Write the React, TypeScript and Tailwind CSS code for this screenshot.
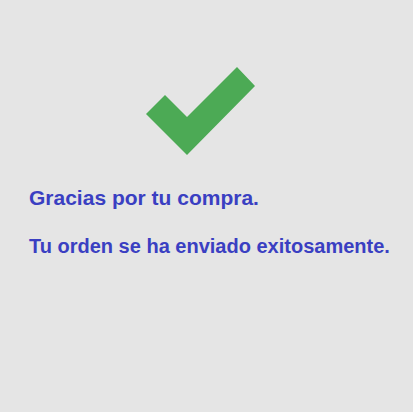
import React from "react";

export default function App() {
  return (
    <div className="w-[413px] h-[412px] bg-[#e5e5e5] flex flex-col" style={{ fontFamily: '"Liberation Sans", Arial, sans-serif' }}>
      <div className="h-[160px] relative">
        <svg width="413" height="160" className="absolute left-0 top-0">
          <polygon points="165,95 146,114 187,155 255,86 237,67 187,117" fill="#4caa55" />
        </svg>
      </div>
      <div className="pl-[29px] pt-[26px] text-[#3a3fc2] font-bold">
        <p className="text-[21px] leading-[24px]">Gracias por tu compra.</p>
        <p className="text-[20px] leading-[24px] mt-[24px]">Tu orden se ha enviado exitosamente.</p>
      </div>
    </div>
  );
}
